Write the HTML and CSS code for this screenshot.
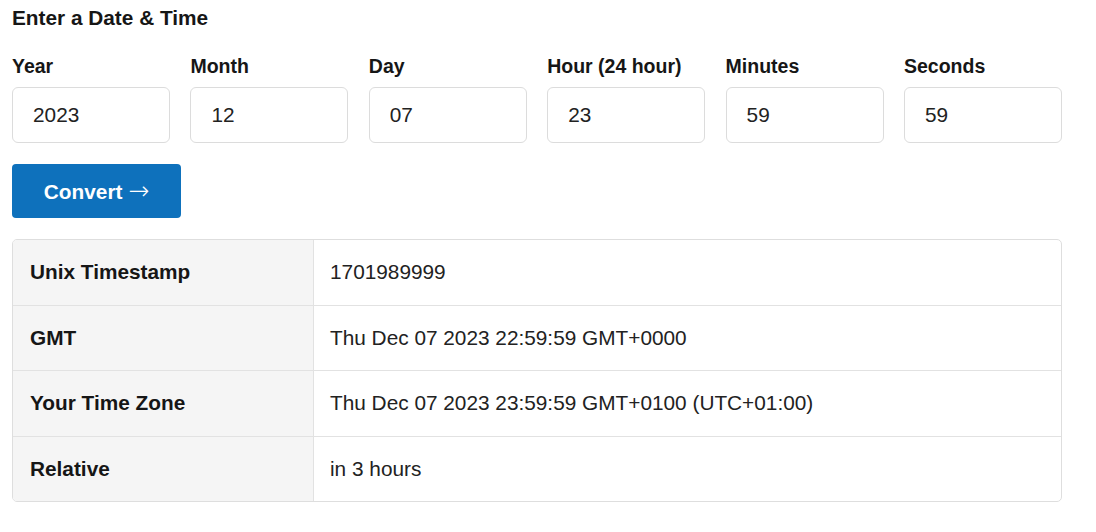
FILE: index.html
```html
<!DOCTYPE html>
<html lang="en">
<head>
<meta charset="utf-8">
<title>Date to Timestamp</title>
<link rel="stylesheet" href="styles.css">
</head>
<body>
<main class="page">
  <h2 class="title">Enter a Date &amp; Time</h2>
  <div class="fields">
    <label class="field"><span class="field-label">Year</span><input class="field-input" type="text" value="2023"></label>
    <label class="field"><span class="field-label">Month</span><input class="field-input" type="text" value="12"></label>
    <label class="field"><span class="field-label">Day</span><input class="field-input" type="text" value="07"></label>
    <label class="field"><span class="field-label">Hour (24 hour)</span><input class="field-input" type="text" value="23"></label>
    <label class="field"><span class="field-label">Minutes</span><input class="field-input" type="text" value="59"></label>
    <label class="field"><span class="field-label">Seconds</span><input class="field-input" type="text" value="59"></label>
  </div>
  <button class="convert" type="button">Convert <span class="arrow">→</span></button>
  <div class="results">
    <div class="row"><div class="key">Unix Timestamp</div><div class="val">1701989999</div></div>
    <div class="row"><div class="key">GMT</div><div class="val">Thu Dec 07 2023 22:59:59 GMT+0000</div></div>
    <div class="row"><div class="key">Your Time Zone</div><div class="val">Thu Dec 07 2023 23:59:59 GMT+0100 (UTC+01:00)</div></div>
    <div class="row"><div class="key">Relative</div><div class="val">in 3 hours</div></div>
  </div>
</main>
</body>
</html>
```
FILE: styles.css
```css
* { box-sizing: border-box; }
html, body { margin: 0; background: #fff; }
body {
  font-family: "Liberation Sans", Arial, sans-serif;
  color: #161616;
}
.page {
  width: 1074px;
  padding: 6px 12px 0 12px;
}
.page > * { width: 1050px; }
.title {
  margin: 0;
  font-size: 20.8px;
  line-height: 24px;
  font-weight: bold;
}
.fields {
  margin-top: 24px;
  display: grid;
  grid-template-columns: repeat(6, 1fr);
  column-gap: 20.4px;
}
.field { display: flex; flex-direction: column; }
.field-label {
  font-size: 19.5px;
  line-height: 24px;
  font-weight: bold;
  margin-bottom: 9px;
}
.field-input {
  height: 56px;
  width: 100%;
  border: 1px solid #dcdcdc;
  border-radius: 6px;
  padding: 0 20px;
  font-family: inherit;
  font-size: 20.8px;
  color: #222;
  background: #fff;
  outline: none;
}
.convert {
  display: block;
  width: 169px;
  height: 54px;
  margin-top: 21px;
  border: none;
  border-radius: 4px;
  background: #0e71bc;
  color: #fff;
  font-family: inherit;
  font-size: 20.8px;
  font-weight: bold;
  padding: 0;
}
.arrow {
  font-family: "DejaVu Sans", sans-serif;
  font-weight: 200;
  font-size: 25px;
  line-height: 1;
}
.results {
  margin-top: 21px;
  border: 1px solid #dedede;
  border-radius: 5px;
  overflow: hidden;
}
.row {
  display: flex;
  height: 65.5px;
  border-top: 1px solid #e2e2e2;
}
.row:first-child { border-top: none; height: 64.5px; }
.key {
  width: 301px;
  flex: none;
  background: #f5f5f5;
  border-right: 1px solid #e2e2e2;
  padding: 0 17px;
  display: flex;
  align-items: center;
  font-size: 20.8px;
  font-weight: bold;
}
.val {
  flex: 1;
  padding: 0 16px;
  display: flex;
  align-items: center;
  font-size: 20.8px;
  color: #222;
}
```
